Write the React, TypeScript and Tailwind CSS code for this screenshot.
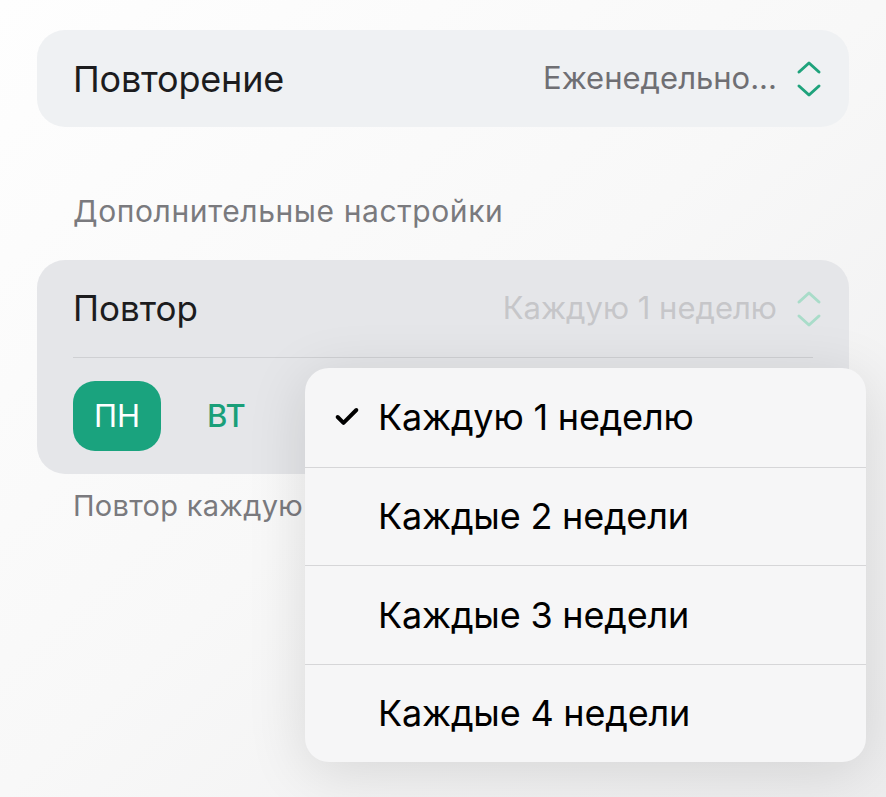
import { Check } from 'lucide-react';

function UpDown({ faded = false }: { faded?: boolean }) {
  return (
    <svg
      viewBox="0 0 28 42"
      className={`h-[42px] w-[28px] ${faded ? 'text-[#a9dcc9]' : 'text-[#1fa37c]'}`}
      fill="none"
      stroke="currentColor"
      strokeWidth={3}
      strokeLinecap="round"
      strokeLinejoin="round"
    >
      <path d="M4 14 L14 5 L24 14" />
      <path d="M4 28 L14 37 L24 28" />
    </svg>
  );
}

const options = [
  { label: 'Каждую 1 неделю', checked: true },
  { label: 'Каждые 2 недели', checked: false },
  { label: 'Каждые 3 недели', checked: false },
  { label: 'Каждые 4 недели', checked: false },
];

export default function App() {
  return (
    <div
      className="relative h-[797px] w-[886px] overflow-hidden bg-gradient-to-br from-[#fefefe] via-[#f8f8f8] to-[#ededee]"
      style={{ fontFamily: 'Inter, "Noto Sans", sans-serif' }}
    >
      <div className="px-[37px] pt-[30px]">
        {/* Repeat mode */}
        <div className="flex h-[97px] items-center justify-between rounded-[28px] bg-[#eff1f3] pl-[36px] pr-[26px]">
          <span className="text-[36px] tracking-[-0.2px] text-[#1c1c1e]">Повторение</span>
          <div className="flex items-center gap-[18px]">
            <span className="text-[31px] text-[#6f6f73]">Еженедельно...</span>
            <UpDown />
          </div>
        </div>

        <div className="mt-[66px] pl-[36px] text-[30px] leading-[36px] tracking-[0.6px] text-[#7a7a7e]">
          Дополнительные настройки
        </div>

        {/* Extra settings */}
        <div className="mt-[31px] rounded-[28px] bg-[#e5e6e9]">
          <div className="mx-[36px] flex h-[98px] items-center justify-between border-b border-[#cfd0d3]">
            <span className="text-[35px] text-[#1c1c1e]">Повтор</span>
            <div className="mr-[-10px] flex items-center gap-[18px]">
              <span className="text-[31px] text-[#c6c6c9]">Каждую 1 неделю</span>
              <UpDown faded />
            </div>
          </div>
          <div className="flex h-[116px] items-center gap-[46px] px-[36px]">
            <div className="flex h-[70px] w-[88px] items-center justify-center rounded-[22px] bg-[#1aa37e] text-[31px] text-white">
              ПН
            </div>
            <span className="text-[31px] font-medium text-[#1a9f79]">ВТ</span>
          </div>
        </div>

        <div className="mt-[14px] pl-[36px] text-[29px] leading-[36px] tracking-[0.3px] text-[#7a7a7e]">
          Повтор каждую неделю
        </div>
      </div>

      {/* Dropdown menu */}
      <div className="absolute left-[305px] top-[368px] w-[561px] overflow-hidden rounded-[24px] bg-[#f6f6f7] shadow-[0_10px_60px_rgba(0,0,0,0.12)]">
        {options.map((o, i) => (
          <div
            key={o.label}
            className={`flex h-[98.5px] items-center ${i > 0 ? 'border-t border-[#d6d6d8]' : ''}`}
          >
            <div className="flex w-[73px] justify-end pr-[17px]">
              {o.checked && <Check className="h-[28px] w-[28px] text-black" strokeWidth={3.4} />}
            </div>
            <span className="text-[36px] tracking-[-0.2px] text-black">{o.label}</span>
          </div>
        ))}
      </div>
    </div>
  );
}
